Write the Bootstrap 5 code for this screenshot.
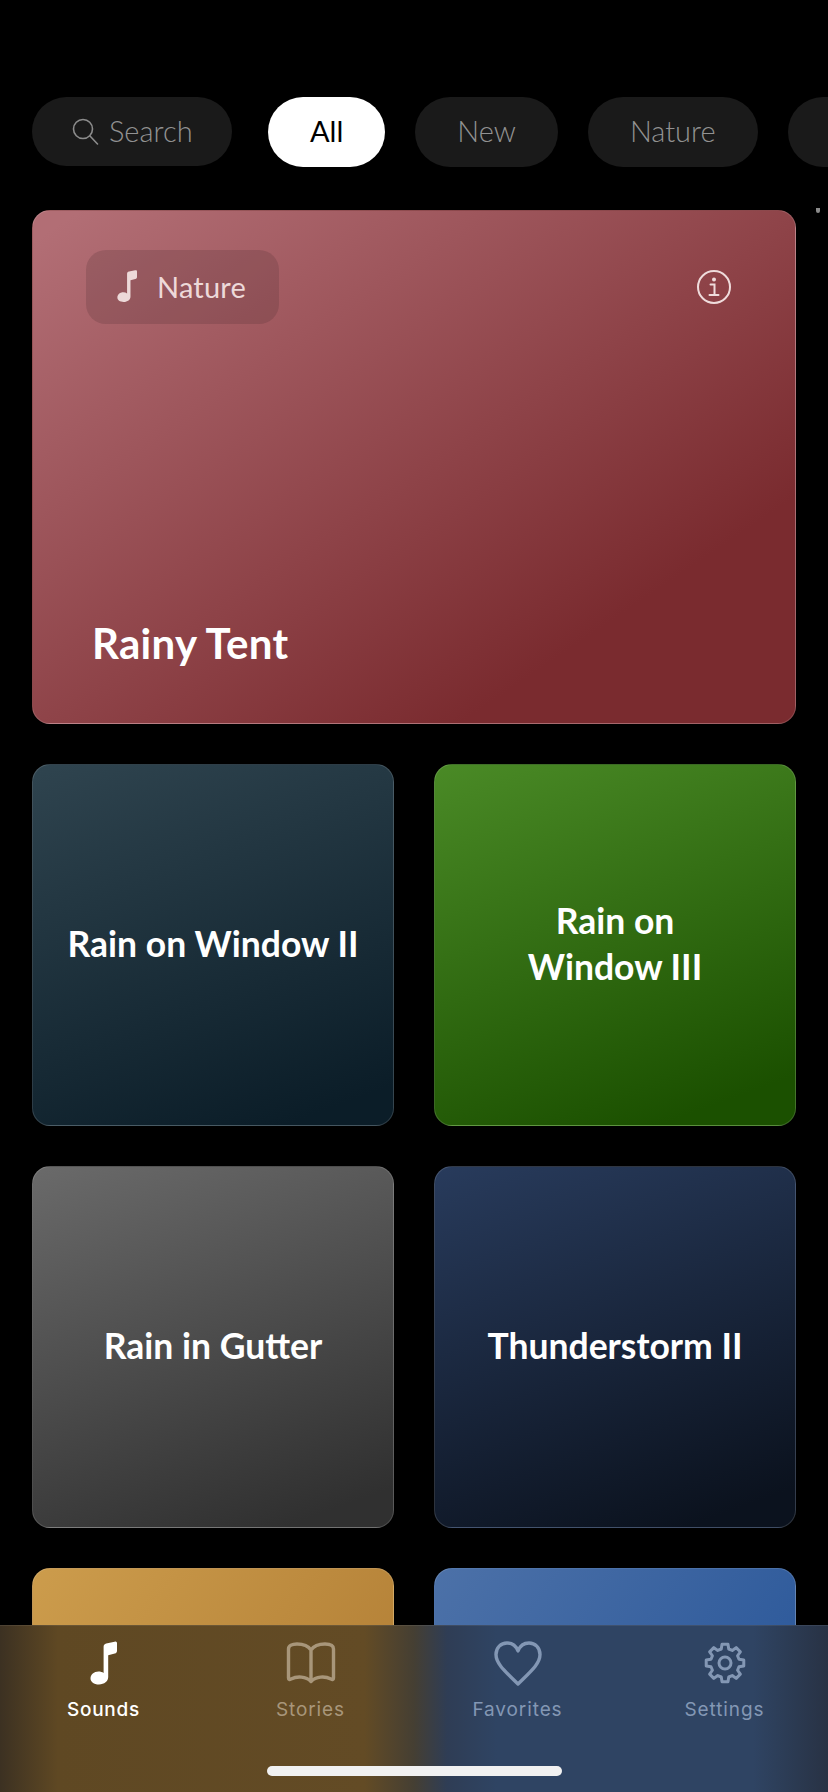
<!DOCTYPE html>
<html lang="en">
<head>
<meta charset="utf-8">
<title>Sounds</title>
<link href="https://cdn.jsdelivr.net/npm/bootstrap@5.3.0/dist/css/bootstrap.min.css" rel="stylesheet">
<style>
html,body{background:#000;margin:0}
.shell{width:828px;height:1792px;overflow:hidden;background:#000;font-family:Lato,"Open Sans",sans-serif;position:relative}
.feed{flex:1 1 0;min-height:0;overflow:hidden;padding-top:97px}
.chips{gap:30px;padding-left:32px;height:70px;overflow:hidden}
.chip{flex:0 0 auto;height:70px;border-radius:35px;background:#1a1a1a;color:#929292;font-size:29px;font-weight:300;padding:0 42px 3px;line-height:1}
.chip-search{width:200px;padding:0 0 2px 39px;gap:9px;margin-right:6px;height:69px}
.chip-on{background:#fff;color:#000;font-weight:400;padding:0 42px 3px}
.chip-rest{width:120px}
.sgrid{display:grid;grid-template-columns:362px 362px;gap:40px;padding:43px 32px 0}
.tile{height:362px;border-radius:18px;border:1px solid rgba(255,255,255,.14);color:#fff;font-size:35.5px;font-weight:700;line-height:46px;text-align:center;padding:0 20px 2px}
.hero{grid-column:1 / span 2;height:514px;text-align:left;padding:39px 63px 0 53px;background:linear-gradient(146deg,#b26e75 3%,#7a2b2f 78%)}
.hero-top{height:74px}
.hero-tag{width:193px;height:74px;border-radius:20px;background:rgba(70,40,45,.2);gap:20px;padding:0 0 2px 31px;font-size:29px;font-weight:400;letter-spacing:.2px;color:#edd9d9;line-height:1}
.hero-name{font-size:42px;letter-spacing:.3px;line-height:50px;margin-top:auto;padding:0 0 55px 6px}
.t-slate{background:linear-gradient(160deg,#2f444f,#0b1d28 92%)}
.t-green{background:linear-gradient(160deg,#4a8a26,#1b5000 90%)}
.t-grey{background:linear-gradient(160deg,#6a6a6a,#303030 92%)}
.t-navy{background:linear-gradient(160deg,#283b5c,#0b121e 92%)}
.t-gold{background:linear-gradient(125deg,#cc9c4c,#b58238 70%)}
.t-blue{background:linear-gradient(125deg,#4c71a8,#2e5a9b 70%)}
.tabbar{flex:0 0 167px;padding-top:14px;background:linear-gradient(90deg,#3c3122 0,#5f4823 7%,#634b25 44%,#453f33 50%,#2f3d55 54%,#2f4463 60%,#2f4463 91%,#283244 100%);border-top:1px solid rgba(255,255,255,.08)}
.tab{font-family:Inter,Roboto,sans-serif;font-size:19px;letter-spacing:.9px;line-height:24px;color:#a8967a;font-weight:400}
.tab svg{display:block;height:46px}
.tab-on{color:#fff;font-weight:500;letter-spacing:.7px}
.tab-cool{color:#8397b4}
.tab-label{margin-top:12px}
.homebar{width:295px;height:10px;border-radius:5px;background:#f1f1f1;margin:44px auto 0}
.scrolldot{position:absolute;left:816px;top:208px;width:4px;height:5px;border-radius:0 0 2px 2px;background:#8a8a8a}
</style>
</head>
<body>
<div class="shell d-flex flex-column">
  <div class="feed">
    <div class="chips d-flex">
      <div class="chip chip-search d-flex align-items-center">
        <svg width="29" height="29" viewBox="0 0 29 29" fill="none" stroke="#8c8c8c" stroke-width="1.6" stroke-linecap="round"><circle cx="12" cy="13" r="9.5"/><path d="M19 20l7.5 8"/></svg>
        <span>Search</span>
      </div>
      <div class="chip chip-on d-flex align-items-center">All</div>
      <div class="chip d-flex align-items-center">New</div>
      <div class="chip d-flex align-items-center">Nature</div>
      <div class="chip chip-rest d-flex align-items-center"></div>
    </div>
    <div class="sgrid">
      <div class="tile hero d-flex flex-column">
        <div class="hero-top d-flex justify-content-between align-items-center">
          <div class="hero-tag d-flex align-items-center">
            <svg width="20" height="32" viewBox="0 0 27 43" fill="#edd9d9"><path d="M13.6 36V5.2c0-1.8.9-2.8 2.6-3.3L24.6.2C26.2-.2 27 .5 27 2v7.3c0 1.6-.7 2.4-2.2 2.8l-6.6 1.7V35.6C18.2 40 14.3 43 9 43 3.8 43 .5 40.3.5 37c0-4 3.5-7 8-7 2 0 3.8.5 5.1 1.5z"/></svg>
            <span>Nature</span>
          </div>
          <svg width="36" height="36" viewBox="0 0 36 36" fill="none" stroke="#efdcdc" stroke-width="2"><circle cx="18" cy="18" r="16"/><circle cx="18" cy="10.5" r="2" fill="#efdcdc" stroke="none"/><path d="M14.5 15.5h4v10M13.5 26h9" stroke-linecap="round"/></svg>
        </div>
        <div class="hero-name">Rainy Tent</div>
      </div>
      <div class="tile t-slate d-flex align-items-center justify-content-center"><span>Rain on Window II</span></div>
      <div class="tile t-green d-flex align-items-center justify-content-center"><span>Rain on<br>Window III</span></div>
      <div class="tile t-grey d-flex align-items-center justify-content-center"><span>Rain in Gutter</span></div>
      <div class="tile t-navy d-flex align-items-center justify-content-center"><span>Thunderstorm II</span></div>
      <div class="tile t-gold"></div>
      <div class="tile t-blue"></div>
    </div>
  </div>
  <div class="tabbar">
    <div class="row g-0 text-center">
      <div class="col-3 tab tab-on d-flex flex-column align-items-center">
        <svg width="27" height="46" viewBox="0 -1.5 27 46" fill="#fff"><path d="M13.6 36V5.2c0-1.8.9-2.8 2.6-3.3L24.6.2C26.2-.2 27 .5 27 2v7.3c0 1.6-.7 2.4-2.2 2.8l-6.6 1.7V35.6C18.2 40 14.3 43 9 43 3.8 43 .5 40.3.5 37c0-4 3.5-7 8-7 2 0 3.8.5 5.1 1.5z"/></svg>
        <div class="tab-label">Sounds</div>
      </div>
      <div class="col-3 tab d-flex flex-column align-items-center">
        <svg width="50" height="46" viewBox="0 -2 50 46" fill="none" stroke="#a8967a" stroke-width="3.4" stroke-linejoin="round"><path d="M25 8C22 3.5 17 2 11 2 6 2 2.5 3.8 2.5 7v29c0 1.5 1 1.8 2.5 1 6-3 15-2.8 20 2.5 5-5.3 14-5.5 20-2.5 1.5.8 2.5.5 2.5-1V7c0-3.2-3.5-5-8.5-5C33 2 28 3.5 25 8zV39"/></svg>
        <div class="tab-label">Stories</div>
      </div>
      <div class="col-3 tab tab-cool d-flex flex-column align-items-center">
        <svg width="50" height="46" viewBox="0 -1 50 46" fill="none" stroke="#8397b4" stroke-width="3.4" stroke-linejoin="round"><path d="M25 43C13 31 3 23 3 13.5 3 6.5 8 2 14 2c5 0 9 2.8 11 8 2-5.2 6-8 11-8 6 0 11 4.500 11 11.500C47 23 37 31 25 43z"/></svg>
        <div class="tab-label">Favorites</div>
      </div>
      <div class="col-3 tab tab-cool d-flex flex-column align-items-center">
        <svg width="44" height="46" viewBox="0 -2 42 46" fill="none" stroke="#8397b4" stroke-width="3" stroke-linejoin="round"><path d="M23.97 2.23L24.75 7 28.25 8.44 32.17 5.63 36.37 9.83 33.56 13.75 35 17.25 39.77 18.03V23.97L35 24.75 33.56 28.25 36.37 32.17 32.17 36.37 28.25 33.56 24.75 35 23.97 39.77H18.03L17.25 35 13.75 33.56 9.83 36.37 5.63 32.17 8.44 28.25 7 24.75 2.23 23.97V18.03L7 17.25 8.44 13.75 5.63 9.83 9.83 5.63 13.75 8.44 17.25 7 18.03 2.23z"/><circle cx="21" cy="21" r="6"/></svg>
        <div class="tab-label">Settings</div>
      </div>
    </div>
    <div class="homebar"></div>
  </div>
  <div class="scrolldot"></div>
</div>
<script src="https://cdn.jsdelivr.net/npm/bootstrap@5.3.0/dist/js/bootstrap.bundle.min.js"></script>
</body>
</html>
